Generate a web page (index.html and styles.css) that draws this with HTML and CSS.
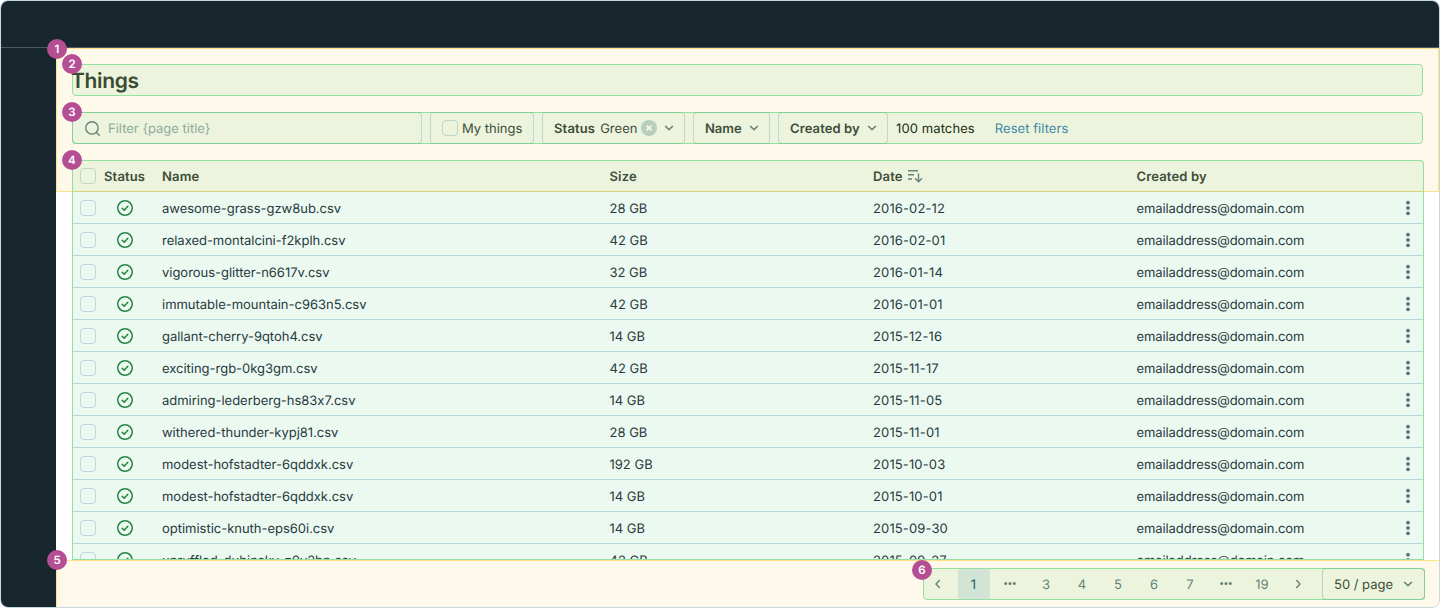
FILE: index.html
```html
<!DOCTYPE html>
<html lang="en">
<head>
<meta charset="utf-8">
<title>Things</title>
<link rel="stylesheet" href="styles.css">
</head>
<body>
<svg class="defs" aria-hidden="true">
  <symbol id="check" viewBox="0 0 16 16"><circle cx="8" cy="8" r="7.25"/><path d="M5.2 8.2l2 2 3.6-4"/></symbol>
  <symbol id="down" viewBox="0 0 16 16"><path d="M4.6 6.4L8 9.7l3.4-3.3"/></symbol>
  <symbol id="more" viewBox="0 0 16 16"><circle cx="8" cy="2.7" r="1.9"/><circle cx="8" cy="8" r="1.9"/><circle cx="8" cy="13.3" r="1.9"/></symbol>
  <symbol id="dots" viewBox="0 0 16 16"><circle cx="3.7" cy="7.5" r="1.5"/><circle cx="8" cy="7.5" r="1.5"/><circle cx="12.3" cy="7.5" r="1.5"/></symbol>
</svg>
<div class="app">
  <header class="topbar"></header>
  <div class="body">
    <nav class="sidebar"></nav>
    <main class="main">
      <section class="page-head">
        <span class="badge badge-corner">1</span>
        <div class="title-box"><span class="badge">2</span><h1>Things</h1></div>
        <div class="filters">
          <span class="badge">3</span>
          <div class="search">
            <svg class="icon-search" viewBox="0 0 16 16"><circle cx="7.4" cy="7.4" r="6.6"/><path d="M12.2 12.2l3 3"/></svg>
            <span class="t">Filter {page title}</span>
          </div>
          <div class="control toggle"><span class="box"></span><span class="t">My things</span></div>
          <div class="control status"><b class="t">Status</b><span class="t value">Green</span>
            <svg class="clear" viewBox="0 0 16 16"><circle cx="8" cy="8" r="8"/><path d="M5.6 5.6l4.8 4.8M10.4 5.6l-4.8 4.8"/></svg>
            <svg class="icon"><use href="#down"/></svg></div>
          <div class="control name"><b class="t">Name</b><svg class="icon"><use href="#down"/></svg></div>
          <div class="control created"><b class="t">Created by</b><svg class="icon"><use href="#down"/></svg></div>
          <span class="t matches">100 matches</span>
          <a class="t reset">Reset filters</a>
        </div>
        <div class="row thead">
          <span class="badge">4</span>
          <span class="box"></span><span class="t">Status</span><span class="t">Name</span><span class="t">Size</span>
          <span class="sorted"><span class="t">Date</span><svg class="icon-sort" viewBox="0 0 16 16"><path d="M1 2.7h10M1 6.8h6M1 11h4M11.5 5.5v8M8 10.3l3.5 3.5 3.5-3.5"/></svg></span>
          <span class="t">Created by</span>
        </div>
      </section>
      <section class="tbody" id="rows"></section>
      <footer class="page-foot">
        <span class="badge badge-corner">5</span>
        <div class="pagination">
          <span class="badge badge-pages">6</span>
          <span class="page prev"><svg class="icon"><path d="M9.3 4.6L6 8l3.3 3.4"/></svg></span>
          <span class="page current"><span class="t">1</span></span>
          <span class="page"><svg class="ellipsis"><use href="#dots"/></svg></span>
          <span class="page"><span class="t">3</span></span><span class="page"><span class="t">4</span></span><span class="page"><span class="t">5</span></span><span class="page"><span class="t">6</span></span><span class="page"><span class="t">7</span></span>
          <span class="page"><svg class="ellipsis"><use href="#dots"/></svg></span>
          <span class="page"><span class="t">19</span></span>
          <span class="page"><svg class="icon"><path d="M6.7 4.6L10 8l-3.3 3.4"/></svg></span>
          <div class="per-page"><span class="t">50 / page</span><svg class="icon"><use href="#down"/></svg></div>
        </div>
      </footer>
    </main>
  </div>
</div>
<script src="script.js"></script>
</body>
</html>
```

FILE: styles.css
```css
* { box-sizing: border-box; }
body { margin: 0; background: #fff; font-family: Inter, "Liberation Sans", sans-serif; font-size: 13px; line-height: 16px; color: #273a3d; text-rendering: geometricPrecision; font-feature-settings: "calt" 0; }
svg { display: block; flex: none; fill: none; }
.defs { position: absolute; width: 0; height: 0; }
.app { width: 1440px; height: 608px; border: 1px solid #c8d9de; border-radius: 8px; overflow: hidden; display: flex; flex-direction: column; background: #fff; }
.topbar { height: 47px; flex: none; background: #18272e; border-bottom: 1px solid #4b5a60; }
.body { display: flex; flex: 1; min-height: 0; }
.sidebar { width: 55px; flex: none; background: #18272e; }
.main { flex: 1; display: flex; flex-direction: column; min-width: 0; }
.t { padding-top: 2px; }

.page-head { position: relative; height: 144px; flex: none; padding: 15px 15px 0; background: #fff9eb; border: 1px solid #ffe283; display: flex; flex-direction: column; gap: 16px; }
.title-box, .filters { position: relative; width: 1351px; height: 32px; flex: none; display: flex; align-items: center; background: #ecf4dd; border: 1px solid #96dfa3; border-radius: 4px; }
h1 { margin: 4px 0 0 -2px; font-size: 21px; line-height: 30px; font-weight: 600; letter-spacing: -0.35px; color: #3a4a33; }
.badge { position: absolute; left: -11px; top: -11px; z-index: 3; width: 20px; height: 20px; border-radius: 50%; background: #b44f93; color: #fff; font-size: 11.5px; font-weight: 600; line-height: 20px; text-align: center; }
.badge-corner { left: -10px; top: -10px; }
.page-foot > .badge-corner { top: -11px; }
.badge.badge-pages { left: -12px; top: -9px; }

.filters { gap: 8px; color: #3e4c3a; }
.search, .control { height: 32px; margin: -1px 0; border: 1px solid #c2d8c9; border-top-color: #84d09a; border-bottom-color: #84d09a; border-radius: 4px; display: flex; align-items: center; }
.search { width: 350px; margin-left: -1px; padding-left: 12px; gap: 8px; color: #91aa9b; border-left-color: #84d09a; }
.icon-search { width: 15px; height: 15px; stroke: #69827a; stroke-width: 1.5; stroke-linecap: round; }
.toggle { width: 104px; padding-left: 11px; gap: 4px; }
.status { width: 143px; padding-left: 11px; }
.name { width: 77px; padding-left: 11px; gap: 4px; }
.created { width: 110px; padding-left: 11px; gap: 4px; letter-spacing: 0.1px; }
b { font-weight: 600; }
.status b { letter-spacing: 0.15px; }
.value { margin: 0 4px 0 5px; }
.clear { width: 16px; height: 16px; margin-right: 4px; fill: #b9cec0; stroke: none; }
.clear path { stroke: #f3f9e9; stroke-width: 1.6; }
.icon { width: 16px; height: 16px; stroke: #69827a; stroke-width: 1.5; stroke-linecap: round; stroke-linejoin: round; }
.matches { color: #212d16; letter-spacing: 0.1px; }
.reset { margin-left: 12px; color: #4389a5; letter-spacing: 0.05px; }
.box { width: 16px; height: 16px; flex: none; border: 1px solid #bcd6dc; border-radius: 4px; }
.filters .box, .thead .box { border-color: #c2d5c4; }

.row { display: grid; grid-template-columns: 24px 58px 447.5px 263.5px 263.5px 263.5px 16px; align-items: center; height: 32px; flex: none; padding: 1px 0 0 7px; border-bottom: 1px solid #b8d4d6; }
.thead { position: relative; width: 1352px; padding-top: 0; background: #ecf4dd; border: 1px solid #96dfa3; border-bottom: 1px solid #d5d580; border-radius: 4px 4px 0 0; font-weight: 600; color: #3e4c3a; letter-spacing: 0.15px; }
.file { letter-spacing: -0.02px; }
.date { letter-spacing: 0.13px; }
.email { letter-spacing: -0.09px; }
.sorted { display: flex; gap: 4px; align-items: center; }
.icon-sort { width: 16px; height: 16px; stroke: #69827a; stroke-width: 1.4; }
.tbody { width: 1352px; height: 368px; flex: none; margin-left: 16px; overflow: hidden; background: #ecf9f1; border: 1px solid #96dfa3; border-top: 0; }
.state { width: 16px; height: 16px; margin-left: 13px; stroke: #258345; stroke-width: 1.5; stroke-linecap: round; stroke-linejoin: round; }
.more { width: 16px; height: 16px; fill: #587780; }

.page-foot { position: relative; flex: 1; padding: 7px 14px 0 0; background: #fff9eb; border: 1px solid #ffe283; border-width: 1px 0 0 1px; display: flex; justify-content: flex-end; }
.pagination { position: relative; width: 502px; height: 32px; display: flex; align-items: center; background: #ecf4dd; border: 1px solid #96dfa3; border-radius: 4px; color: #69827a; }
.page { width: 36px; height: 30px; display: flex; align-items: center; justify-content: center; }
.prev { width: 28px; margin-right: 6px; }
.current { width: 32px; margin-right: 2px; padding-right: 1px; background: #d1e4d6; color: #2d5861; border-radius: 3px; }
.ellipsis { width: 16px; height: 16px; fill: #69827a; }
.per-page { width: 103px; height: 32px; margin: -1px -1px -1px auto; padding: 0 8px 0 11px; display: flex; align-items: center; justify-content: space-between; border: 1px solid #84d09a; border-left-color: #b7d8bf; border-radius: 4px; color: #3e4c3a; }
```

FILE: script.js
```js
const rows = [
  ['awesome-grass-gzw8ub.csv', '28 GB', '2016-02-12'],
  ['relaxed-montalcini-f2kplh.csv', '42 GB', '2016-02-01'],
  ['vigorous-glitter-n6617v.csv', '32 GB', '2016-01-14'],
  ['immutable-mountain-c963n5.csv', '42 GB', '2016-01-01'],
  ['gallant-cherry-9qtoh4.csv', '14 GB', '2015-12-16'],
  ['exciting-rgb-0kg3gm.csv', '42 GB', '2015-11-17'],
  ['admiring-lederberg-hs83x7.csv', '14 GB', '2015-11-05'],
  ['withered-thunder-kypj81.csv', '28 GB', '2015-11-01'],
  ['modest-hofstadter-6qddxk.csv', '192 GB', '2015-10-03'],
  ['modest-hofstadter-6qddxk.csv', '14 GB', '2015-10-01'],
  ['optimistic-knuth-eps60i.csv', '14 GB', '2015-09-30'],
  ['unruffled-dubinsky-z0v2bn.csv', '42 GB', '2015-09-27'],
];
document.getElementById('rows').innerHTML = rows.map(([name, size, date]) => `
  <div class="row"><span class="box"></span><svg class="state"><use href="#check"/></svg>
  <span class="t file">${name}</span><span class="t">${size}</span><span class="t date">${date}</span><span class="t email">emailaddress@domain.com</span>
  <svg class="more"><use href="#more"/></svg></div>`).join('');
```
